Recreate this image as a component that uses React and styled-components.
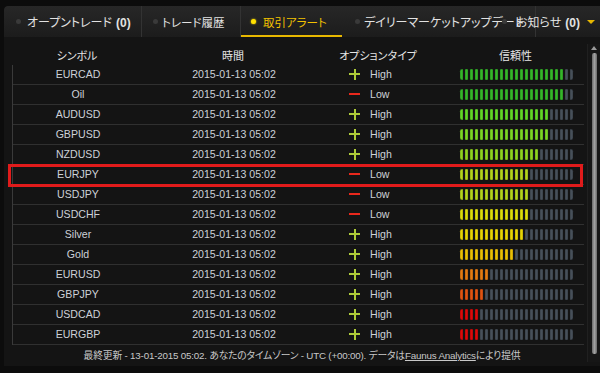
import React from "react";
import styled, { createGlobalStyle } from "styled-components";

const Global = createGlobalStyle`
  html, body { margin: 0; padding: 0; background: #0c0c0c; }
  body {
    font-family: "Liberation Sans", "Noto Sans CJK JP", sans-serif;
    font-feature-settings: "palt";
  }
`;

const Frame = styled.div`
  width: 600px;
  height: 373px;
  box-sizing: border-box;
  padding: 6px 0 7px 4px;
  display: flex;
  flex-direction: column;
  overflow: hidden;
`;

const Panel = styled.div`
  flex: 1;
  display: flex;
  flex-direction: column;
  background: #141414;
  border-top-left-radius: 4px;
  overflow: hidden;
`;

const TabBar = styled.div`
  height: 31px;
  flex: none;
  display: flex;
  align-items: stretch;
  background: linear-gradient(#272727, #1c1c1c);
  border-top-left-radius: 4px;
`;

const Tab = styled.div`
  position: relative;
  width: ${(p) => p.$w}px;
  flex: none;
  display: flex;
  align-items: center;
  gap: ${(p) => p.$gap || 6}px;
  padding-left: ${(p) => p.$pl}px;
  margin-left: ${(p) => p.$ml || 0}px;
  box-sizing: border-box;
  border-right: ${(p) => (p.$sep ? "1px solid #333" : "none")};
  color: ${(p) => (p.$active ? "#f2c200" : "#e2e2e2")};
  font-size: ${(p) => p.$fs || 11.5}px;
  white-space: nowrap;
  &::after {
    content: "";
    display: ${(p) => (p.$active ? "block" : "none")};
    position: absolute;
    left: 0;
    right: 0;
    bottom: 0;
    height: 2px;
    background: #e8b800;
  }
`;

const Dot = styled.span`
  width: 5px;
  height: 5px;
  border-radius: 50%;
  flex: none;
  background: ${(p) => (p.$active ? "#ffe000" : "#3a3a3a")};
  box-shadow: ${(p) => (p.$active ? "0 0 2px #ffe000" : "none")};
`;

const Count = styled.b`
  font-weight: bold;
  margin-left: 4px;
  font-family: "Liberation Sans", sans-serif;
`;

const Caret = styled.span`
  width: 0;
  height: 0;
  border-left: 4px solid transparent;
  border-right: 4px solid transparent;
  border-top: 4px solid #e8b800;
  margin-left: -2px;
`;

const Body = styled.div`
  flex: 1;
  display: flex;
  min-height: 0;
`;

const TableArea = styled.div`
  flex: 1;
  padding: 8px 3px 0 8px;
  display: flex;
  flex-direction: column;
`;

const grid = `
  display: grid;
  grid-template-columns: 130px 182px 108px 1fr;
  align-items: center;
`;

const HeadRow = styled.div`
  ${grid}
  height: 20px;
  color: #e6e6e6;
  font-size: 11px;
`;

const HeadCell = styled.div`
  text-align: center;
  ${(p) => p.$bar && "padding-left: 27px; width: 113px; box-sizing: content-box;"}
`;

const Table = styled.div`
  border-left: 1px solid #3a3a3a;
`;

const Row = styled.div`
  ${grid}
  position: relative;
  height: 19px;
  border-bottom: 1px solid #303030;
  font-size: 10.6px;
  color: #cdd1d8;
`;

const Highlight = styled.div`
  position: absolute;
  left: -5px;
  right: 1px;
  top: -1px;
  bottom: -3px;
  border: 3px solid #e01b1b;
  pointer-events: none;
`;

const Cell = styled.div`
  text-align: center;
`;

const TypeCell = styled.div`
  display: flex;
  align-items: center;
  gap: 10px;
  padding-left: 24px;
`;

const Sign = styled.span`
  position: relative;
  width: 11px;
  height: 11px;
  flex: none;
  &::before {
    content: "";
    position: absolute;
    left: 0;
    right: 0;
    top: 4.5px;
    height: 2px;
    background: ${(p) => (p.$up ? "#aecb38" : "#e8281c")};
  }
  &::after {
    content: "";
    display: ${(p) => (p.$up ? "block" : "none")};
    position: absolute;
    top: 0;
    bottom: 0;
    left: 4.5px;
    width: 2px;
    background: #aecb38;
  }
`;

const BarCell = styled.div`
  padding-left: 27px;
  display: flex;
`;

const Bar = styled.div`
  display: flex;
  gap: 2px;
  height: 11px;
`;

const Seg = styled.span`
  width: 3px;
  height: 11px;
  border-radius: 1px;
  background: ${(p) => p.$c};
  box-shadow: inset 0 0 0 0.5px rgba(0, 0, 0, 0.25);
  &:first-child {
    border-radius: 3px 1px 1px 3px;
  }
  &:last-child {
    border-radius: 1px 3px 3px 1px;
  }
`;

const Footer = styled.div`
  height: 22px;
  display: flex;
  align-items: center;
  justify-content: center;
  color: #c8c8c8;
  font-size: 9.8px;
  letter-spacing: -0.2px;
  white-space: nowrap;
  padding-left: 8px;
`;

const Link = styled.span`
  text-decoration: underline;
`;

const ScrollTrack = styled.div`
  width: 12px;
  flex: none;
  margin: 7px 0 4px;
  display: flex;
  flex-direction: column;
  align-items: center;
  border-left: 1px solid #202020;
  background: #161616;
`;

const Arrow = styled.span`
  width: 0;
  height: 0;
  margin-top: 2px;
  border-left: 3px solid transparent;
  border-right: 3px solid transparent;
  border-bottom: 4px solid #9a9a9a;
`;

const Thumb = styled.div`
  width: 5px;
  margin-top: 3px;
  height: 301px;
  border-radius: 2px;
  background: linear-gradient(90deg, #6a6a6a, #a0a0a0, #6a6a6a);
`;

const GRAY = "#47505a";
const rows = [
  ["EURCAD", true, 21, "#35b62a"],
  ["Oil", false, 21, "#35b62a"],
  ["AUDUSD", true, 18, "#62d626"],
  ["GBPUSD", true, 18, "#7cd624"],
  ["NZDUSD", true, 16, "#8fd21f"],
  ["EURJPY", false, 14, "#b4d41c", true],
  ["USDJPY", false, 14, "#b4d41c"],
  ["USDCHF", false, 14, "#dcdc0a"],
  ["Silver", true, 13, "#e6d404"],
  ["Gold", true, 11, "#eabf04"],
  ["EURUSD", true, 6, "#e27a12"],
  ["GBPJPY", true, 5, "#e05412"],
  ["USDCAD", true, 4, "#dc0a0a"],
  ["EURGBP", true, 4, "#dc0a0a"],
];

function Strength({ n, color }) {
  return (
    <Bar>
      {Array.from({ length: 23 }, (_, i) => (
        <Seg key={i} $c={i < n ? color : GRAY} />
      ))}
    </Bar>
  );
}

export default function App() {
  return (
    <>
      <Global />
      <Frame>
        <Panel>
          <TabBar>
            <Tab $w={138} $pl={12} $fs={12} $sep>
              <Dot />
              <span>
                オープントレード<Count>(0)</Count>
              </span>
            </Tab>
            <Tab $w={99} $pl={11} $gap={4} $sep>
              <Dot />
              <span>トレード履歴</span>
            </Tab>
            <Tab $w={101} $pl={10} $gap={7} $active>
              <Dot $active />
              <span>取引アラート</span>
            </Tab>
            <Tab $w={194} $pl={13} $gap={4} $fs={12} $sep>
              <Dot />
              <span>デイリーマーケットアップデート</span>
            </Tab>
            <Tab $w={100} $pl={2} $gap={9} $fs={12} $ml={-36}>
              <Dot />
              <span>
                お知らせ<Count>(0)</Count>
              </span>
              <Caret />
            </Tab>
          </TabBar>
          <Body>
            <TableArea>
              <HeadRow>
                <HeadCell>シンボル</HeadCell>
                <HeadCell>時間</HeadCell>
                <HeadCell>オプションタイプ</HeadCell>
                <HeadCell $bar>信頼性</HeadCell>
              </HeadRow>
              <Table>
                {rows.map(([sym, up, n, color, hl]) => (
                  <Row key={sym}>
                    <Cell>{sym}</Cell>
                    <Cell>2015-01-13 05:02</Cell>
                    <TypeCell>
                      <Sign $up={up} />
                      <span>{up ? "High" : "Low"}</span>
                    </TypeCell>
                    <BarCell>
                      <Strength n={n} color={color} />
                    </BarCell>
                    {hl && <Highlight />}
                  </Row>
                ))}
              </Table>
              <Footer>
                最終更新 - 13-01-2015 05:02. あなたのタイムゾーン - UTC (+00:00). データは
                <Link>Faunus Analytics</Link>により提供
              </Footer>
            </TableArea>
            <ScrollTrack>
              <Arrow />
              <Thumb />
            </ScrollTrack>
          </Body>
        </Panel>
      </Frame>
    </>
  );
}
